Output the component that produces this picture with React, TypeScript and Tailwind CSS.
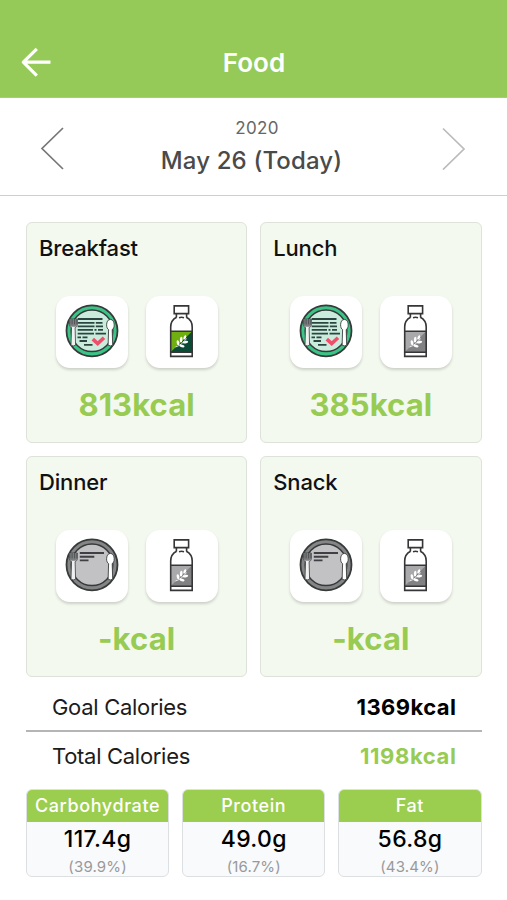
type Meal = {
  name: string;
  kcal: string;
  recorded: boolean;
  supplement: boolean;
};

type Nutrient = {
  name: string;
  amount: string;
  ratio: string;
};

const meals: Meal[] = [
  { name: "Breakfast", kcal: "813", recorded: true, supplement: true },
  { name: "Lunch", kcal: "385", recorded: true, supplement: false },
  { name: "Dinner", kcal: "-", recorded: false, supplement: false },
  { name: "Snack", kcal: "-", recorded: false, supplement: false },
];

const nutrients: Nutrient[] = [
  { name: "Carbohydrate", amount: "117.4g", ratio: "39.9%" },
  { name: "Protein", amount: "49.0g", ratio: "16.7%" },
  { name: "Fat", amount: "56.8g", ratio: "43.4%" },
];

const PlateIcon = ({ active }: { active: boolean }) => (
  <svg viewBox="0 0 72 72" className="h-[72px] w-[72px]" fill="none">
    <circle cx="36" cy="34.8" r="25.5" fill={active ? "#3cc486" : "#858585"} stroke="#363a3b" strokeWidth="1.8" />
    <circle cx="36" cy="34.8" r="20.8" fill={active ? "#c9ecdc" : "#c2c2c4"} stroke="#363a3b" strokeWidth="1.5" />
    {active ? (
      <>
        <path
          d="M21.7 23H46.5M21.7 26.8H38.5M39.8 26.8H46.5M21.7 30.3H38.5M39.8 30.3H47M21.7 33.9H37M38.5 33.9H40.5M42 33.9H47M21.7 37.6H38M39.5 37.6H50M21.5 41.3H25M26.5 41.3H31.5M23.5 45H31M28 48.8H36.5"
          stroke="#2d4541"
          strokeWidth="1.8"
        />
        <path d="M36.8 43.2L41.7 47.6L48 41.8" stroke="#f04f6c" strokeWidth="3.6" />
      </>
    ) : (
      <path d="M23.8 23H48M23.8 26.8H38.3M23.8 30.4H32.5" stroke="#3f3f44" strokeWidth="1.9" />
    )}
    <path
      d="M13.4 23V28.8Q13.4 30.8 15.5 31.6L15 49.2Q17.3 50.6 19.6 49.2L19.1 31.6Q21.3 30.8 21.3 28.8V23Z"
      fill="#f0f0f0"
      stroke="#3b3e40"
      strokeWidth="0.8"
    />
    <path d="M13.6 23H21.1V28.6Q21.1 30.3 19.3 30.7H15.4Q13.6 30.3 13.6 28.6Z" fill="#7c7e80" />
    <path d="M13.8 23V28.4M16.1 23V28.4M18.6 23V28.4M20.9 23V28.4" stroke="#45484a" strokeWidth="0.8" />
    <path
      d="M54.4 23.4C57 23.4 58.2 26.2 58.2 28.8C58.2 31.2 57.5 33 56.2 33.6L56.7 49.2Q54.4 50.6 52.1 49.2L52.6 33.6C51.3 33 50.6 31.2 50.6 28.8C50.6 26.2 51.8 23.4 54.4 23.4Z"
      fill="#fff"
      stroke="#3b3e40"
      strokeWidth="0.9"
    />
  </svg>
);

const BottleIcon = ({ active }: { active: boolean }) => (
  <svg viewBox="0 0 72 72" className="h-[72px] w-[72px]" fill="none">
    <path d="M24.7 35.5H46V56H24.7Z" fill={active ? "#0b4a34" : "#818184"} />
    <path d="M24.7 35.5H46L24.7 56Z" fill={active ? "#6fb010" : "#a9a9ab"} />
    <g stroke="#363638" strokeWidth="1.6">
      <path d="M28.2 9.9H42.6V17.6H28.2Z" />
      <path d="M30.4 17.6V21.4M40.6 17.6V21.4M33 21.7Q35.5 20.9 38 21.7" />
      <path d="M30.6 21.2C26.6 23.2 24.7 27 24.7 31V60.4H46.2V31C46.2 27 44.3 23.2 40.3 21.2" />
      <path d="M24.7 35.3H46.2M24.7 56.2H46.2" />
    </g>
    <path d="M29.5 51C33 50 37.5 47 40.5 42.5" stroke="#fff" strokeWidth="0.8" />
    <g fill="#fff">
      <ellipse cx="32" cy="46.8" rx="1.3" ry="2.6" transform="rotate(-12 32 46.8)" />
      <ellipse cx="35.2" cy="43.6" rx="1.3" ry="2.8" transform="rotate(4 35.2 43.6)" />
      <ellipse cx="38.8" cy="41.4" rx="1.2" ry="2.3" transform="rotate(24 38.8 41.4)" />
      <ellipse cx="36" cy="50" rx="2.6" ry="1.3" transform="rotate(12 36 50)" />
      <ellipse cx="39.4" cy="46.2" rx="2.8" ry="1.3" transform="rotate(-8 39.4 46.2)" />
    </g>
  </svg>
);

const MealCard = ({ meal }: { meal: Meal }) => (
  <section className="flex h-[221px] flex-col rounded-md border-[1.5px] border-[#dde3d8] bg-[#f3f9ee]">
    <h2 className="mt-[10px] ml-3 text-[22px] leading-[30px] font-medium tracking-[-0.15px] text-[#111]">
      {meal.name}
    </h2>
    <div className="mt-[33px] ml-[29px] flex gap-[18px]">
      <button className="h-[72px] w-[72px] rounded-[14px] bg-white shadow-[0_2px_3px_rgba(0,0,0,0.16)]">
        <PlateIcon active={meal.recorded} />
      </button>
      <button className="h-[72px] w-[72px] rounded-[14px] bg-white shadow-[0_2px_3px_rgba(0,0,0,0.16)]">
        <BottleIcon active={meal.supplement} />
      </button>
    </div>
    <p className="mt-[17px] text-center text-[31px] leading-10 font-bold tracking-[0.1px] text-[#98cb52]">
      {meal.kcal}kcal
    </p>
  </section>
);

const App = () => (
  <div className="flex h-[900px] w-[507px] flex-col overflow-hidden bg-white font-['Inter','Liberation_Sans',sans-serif]">
    <header className="grid h-[98px] grid-cols-[1fr_auto_1fr] items-end border-b border-[#b3bda8] bg-[#95ca59] pb-4 pl-px">
      <button className="mb-[2px] ml-5 h-8 w-8" aria-label="Back">
        <svg viewBox="0 0 32 32" fill="none" stroke="#fff" strokeWidth="3.2" strokeLinejoin="round">
          <path d="M29.5 15.2H2.5M15.8 1.8L2.3 15.2L15.8 28.6" />
        </svg>
      </button>
      <h1 className="text-[26px] leading-9 font-semibold text-white">Food</h1>
    </header>

    <nav className="flex h-[98px] items-center justify-between border-b border-[#cfcfcf] pt-[2px] pr-[41px] pl-[40px]">
      <svg viewBox="0 0 26 44" className="h-11 w-[26px]" fill="none" stroke="#777" strokeWidth="1.7">
        <path d="M23 2L2 22.5L23 43" />
      </svg>
      <div className="flex flex-col items-center">
        <span className="ml-[8px] text-[17px] leading-6 tracking-[0.3px] text-[#666]">2020</span>
        <span className="mt-[3px] mr-[3px] text-[24px] leading-9 font-medium tracking-[0.15px] text-[#4a4a4a]">
          May 26 (Today)
        </span>
      </div>
      <svg viewBox="0 0 26 44" className="h-11 w-[26px]" fill="none" stroke="#bbb" strokeWidth="1.7">
        <path d="M3 2.5L24 23L3 43.5" />
      </svg>
    </nav>

    <main className="pt-[26px] pr-[25.5px] pl-[26px]">
      <div className="grid grid-cols-2 gap-[13px]">
        {meals.map((meal) => (
          <MealCard key={meal.name} meal={meal} />
        ))}
      </div>

      <dl className="text-[22px]">
        <div className="flex h-[55px] items-center justify-between border-b-2 border-[#b5b5b5] pt-[8px] pr-[25px] pl-[26px]">
          <dt className="tracking-[-0.3px] text-[#1c1c1c]">Goal Calories</dt>
          <dd className="font-bold tracking-[0.45px] text-black">1369kcal</dd>
        </div>
        <div className="flex h-[49px] items-center justify-between pr-[25px] pl-[26px]">
          <dt className="tracking-[-0.3px] text-[#1c1c1c]">Total Calories</dt>
          <dd className="font-bold tracking-[0.6px] text-[#98cb52]">1198kcal</dd>
        </div>
      </dl>

      <div className="mt-2 grid grid-cols-3 gap-[13px]">
        {nutrients.map((item) => (
          <div
            key={item.name}
            className="h-[88px] overflow-hidden rounded-md border border-[#dde0e2] bg-[#f8fafc] text-center"
          >
            <h3 className="-mx-px -mt-px h-[33px] bg-[#9bcd4f] text-[18px] leading-[34px] font-medium tracking-[0.6px] text-white">
              {item.name}
            </h3>
            <p className="text-[23px] leading-[34px] font-medium tracking-[0.3px] text-black">{item.amount}</p>
            <p className="text-[15px] leading-[21px] tracking-[0.15px] text-[#999]">({item.ratio})</p>
          </div>
        ))}
      </div>
    </main>
  </div>
);

export default App;
